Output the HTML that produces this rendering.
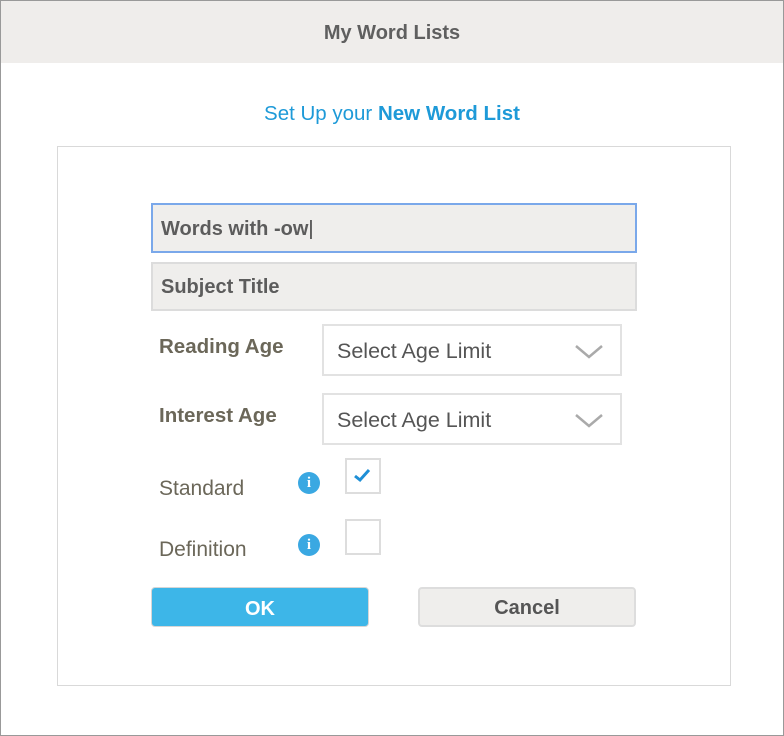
<!DOCTYPE html>
<html><head><style>
*{margin:0;padding:0;box-sizing:border-box}
body{width:784px;height:736px;position:relative;background:#fff;font-family:"Liberation Sans",Roboto,sans-serif;overflow:hidden}
.a{position:absolute}
.outer{left:0;top:0;width:784px;height:736px;border:1px solid #999}
.hdr{left:1px;top:1px;width:782px;height:62px;background:#efedeb;text-align:center;line-height:64px;font-weight:bold;font-size:20px;color:#5f5f5f}
.sub{left:0;top:102px;width:784px;text-align:center;font-size:20.5px;color:#1e9ad8}
.box{left:57px;top:146px;width:674px;height:540px;border:1px solid #d9d9d9}
.inp{left:151px;width:486px;background:#efeeec;font-weight:bold;font-size:20px;color:#5c5c5c;padding-left:8px}
.lbl{left:159px;font-size:20.5px;font-weight:bold;color:#6b6759}
.lbl2{left:159px;font-size:21px;color:#6b6759}
.sel{left:322px;width:300px;height:52px;border:2px solid #e2e2e2;font-size:21.5px;color:#555;padding-left:13px;line-height:51px}
.sel svg{position:absolute;right:16px;top:18px}
.info{left:298px;width:22px;height:22px;border-radius:50%;background:#3aa8e2;color:#fff;font-weight:bold;font-size:15px;text-align:center;line-height:22px;font-family:"Liberation Serif",serif}
.cb{left:345px;width:36px;height:36px;border:2px solid #ddd;background:#fff}
.btn{top:587px;height:40px;width:218px;border-radius:4px;text-align:center;line-height:42px;font-size:20px;font-weight:bold}
</style></head><body>
<div class="a outer"></div>
<div class="a hdr">My Word Lists</div>
<div class="a sub">Set Up your <b>New Word List</b></div>
<div class="a box"></div>
<div class="a inp" style="top:203px;height:50px;border:2px solid #7aa8ea;line-height:49px">Words with -ow<span style="font-weight:normal;color:#444">|</span></div>
<div class="a inp" style="top:262px;height:49px;border:2px solid #dcdcdc;line-height:47px">Subject Title</div>
<div class="a lbl" style="top:335px">Reading Age</div>
<div class="a sel" style="top:324px">Select Age Limit<svg width="30" height="16" viewBox="0 0 30 16"><path d="M2 2 L15 13 L28 2" fill="none" stroke="#aaa" stroke-width="2.5"/></svg></div>
<div class="a lbl" style="top:404px">Interest Age</div>
<div class="a sel" style="top:393px">Select Age Limit<svg width="30" height="16" viewBox="0 0 30 16"><path d="M2 2 L15 13 L28 2" fill="none" stroke="#aaa" stroke-width="2.5"/></svg></div>
<div class="a lbl2" style="top:477px">Standard</div>
<div class="a info" style="top:472px">i</div>
<div class="a cb" style="top:458px"><svg width="32" height="32" viewBox="0 0 32 32"><path d="M8 16 L13 20 L22 10" fill="none" stroke="#1e8fd6" stroke-width="3"/></svg></div>
<div class="a lbl2" style="top:538px">Definition</div>
<div class="a info" style="top:534px">i</div>
<div class="a cb" style="top:519px"></div>
<div class="a btn" style="left:151px;background:#3db6e8;color:#fff;border:1px solid #d6d6d6">OK</div>
<div class="a btn" style="left:418px;background:#efeeec;color:#555;border:2px solid #ddd;line-height:38px">Cancel</div>
</body></html>
